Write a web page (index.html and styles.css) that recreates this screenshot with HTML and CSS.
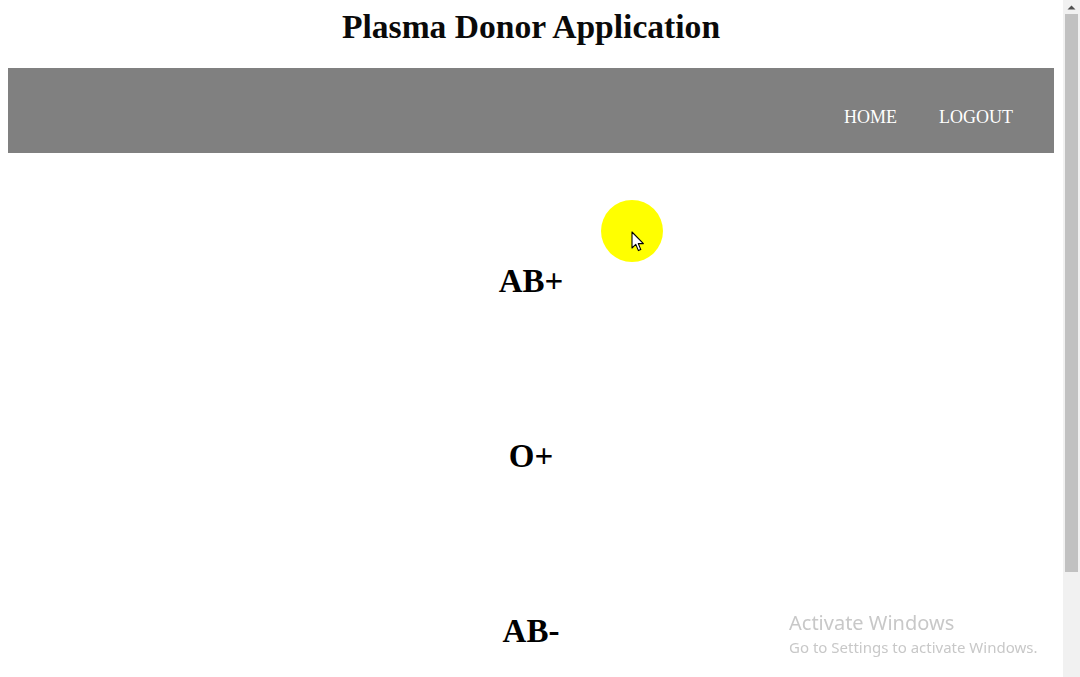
FILE: index.html
```html
<!DOCTYPE html>
<html lang="en">
<head>
<meta charset="utf-8">
<title>Plasma Donor Application</title>
<link rel="stylesheet" href="styles.css">
</head>
<body>
  <h1 class="title">Plasma Donor Application</h1>
  <nav class="nav">
    <a class="nav-link" href="#">HOME</a>
    <a class="nav-link" href="#">LOGOUT</a>
  </nav>
  <main class="groups">
    <h2 class="group">AB+</h2>
    <h2 class="group">O+</h2>
    <h2 class="group">AB-</h2>
  </main>

  <div class="cursor-spot">
    <svg class="cursor" width="14" height="22" viewBox="0 0 14 22">
      <path d="M1 1 L1 17 L4.8 13.4 L7.4 19.6 L9.8 18.6 L7.3 12.6 L12.4 12.6 Z" fill="#fff" stroke="#000" stroke-width="1.1" stroke-linejoin="round"/>
    </svg>
  </div>

  <div class="activate">
    <div class="activate-title">Activate Windows</div>
    <div class="activate-sub">Go to Settings to activate Windows.</div>
  </div>

  <div class="scrollbar">
    <svg class="scroll-arrow" width="9" height="5" viewBox="0 0 9 5"><path d="M0.5 4.5 L4.5 0.5 L8.5 4.5 Z" fill="#505050"/></svg>
    <div class="scroll-thumb"></div>
  </div>
</body>
</html>
```

FILE: styles.css
```css
html {
  overflow: hidden;
  background: #fff;
}
body {
  margin: 0 26px 0 8px;
  font-family: "Liberation Serif", "Times New Roman", serif;
  color: #000;
}
.title {
  margin: 7px 0 22px;
  font-size: 33.6px;
  line-height: 39px;
  font-weight: bold;
  text-align: center;
  color: #0a0a0a;
}
.nav {
  display: flex;
  justify-content: flex-end;
  align-items: flex-start;
  height: 85px;
  box-sizing: border-box;
  padding: 39px 20px 0 0;
  background: #808080;
}
.nav-link {
  padding: 0 21px;
  font-size: 18px;
  line-height: 20px;
  color: #fff;
  text-decoration: none;
}
.groups {
  display: flex;
  flex-direction: column;
  align-items: center;
  gap: 135px;
  padding-top: 108px;
}
.group {
  margin: 0;
  font-size: 33px;
  line-height: 40px;
  font-weight: bold;
}
.cursor-spot {
  position: absolute;
  left: 601px;
  top: 200px;
  width: 62px;
  height: 62px;
  border-radius: 50%;
  background: #ffff00;
}
.cursor {
  position: absolute;
  left: 30px;
  top: 31px;
}
.activate {
  position: fixed;
  left: 789px;
  top: 609px;
  font-family: "Noto Sans", "Open Sans", sans-serif;
  color: #c8c8c8;
}
.activate-title {
  font-size: 20px;
  line-height: 27px;
}
.activate-sub {
  font-size: 15px;
  line-height: 22px;
}
.scrollbar {
  position: fixed;
  top: 0;
  right: 0;
  width: 17px;
  height: 677px;
  background: #f1f1f1;
}
.scroll-arrow {
  position: absolute;
  left: 4px;
  top: 5px;
}
.scroll-thumb {
  position: absolute;
  left: 2px;
  top: 14px;
  width: 13px;
  height: 558px;
  background: #c1c1c1;
}
```
